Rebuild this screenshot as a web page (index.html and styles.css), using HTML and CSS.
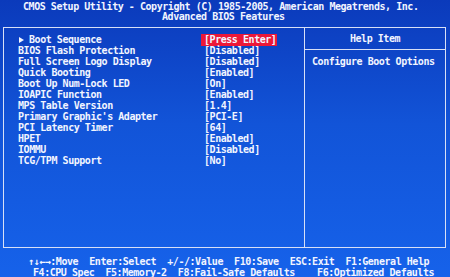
FILE: index.html
```html
<!DOCTYPE html>
<html lang="en">
<head>
    <meta charset="UTF-8">
    <title>Advanced BIOS Features</title>
    <link rel="stylesheet" href="styles.css">
</head>
<body>
    <header class="title">
        <div class="title-line">CMOS Setup Utility - Copyright (C) 1985-2005, American Megatrends, Inc.</div>
        <div class="subtitle-line">Advanced BIOS Features</div>
    </header>

    <main class="setup-box">
        <section class="items">
            <div class="row"><span class="label"><svg class="arrow" width="11" height="8" viewBox="0 0 11 8"><polygon points="1,1 6,4 1,7" fill="#f4f6ff"/></svg>Boot Sequence</span><span class="value selected">[Press Enter]</span></div>
            <div class="row"><span class="label">BIOS Flash Protection</span><span class="value">[Disabled]</span></div>
            <div class="row"><span class="label">Full Screen Logo Display</span><span class="value">[Disabled]</span></div>
            <div class="row"><span class="label">Quick Booting</span><span class="value">[Enabled]</span></div>
            <div class="row"><span class="label">Boot Up Num-Lock LED</span><span class="value">[On]</span></div>
            <div class="row"><span class="label">IOAPIC Function</span><span class="value">[Enabled]</span></div>
            <div class="row"><span class="label">MPS Table Version</span><span class="value">[1.4]</span></div>
            <div class="row"><span class="label">Primary Graphic's Adapter</span><span class="value">[PCI-E]</span></div>
            <div class="row"><span class="label">PCI Latency Timer</span><span class="value">[64]</span></div>
            <div class="row"><span class="label">HPET</span><span class="value">[Enabled]</span></div>
            <div class="row"><span class="label">IOMMU</span><span class="value">[Disabled]</span></div>
            <div class="row"><span class="label">TCG/TPM Support</span><span class="value">[No]</span></div>
        </section>
        <aside class="help">
            <div class="help-title">Help Item</div>
            <div class="help-text">Configure Boot Options</div>
        </aside>
    </main>

    <footer class="keys">
        <div class="keys-line first">↑↓←→:Move  Enter:Select  +/-/:Value  F10:Save  ESC:Exit  F1:General Help</div>
        <div class="keys-line second">F4:CPU Spec  F5:Memory-2  F8:Fail-Safe Defaults    F6:Optimized Defaults</div>
    </footer>
</body>
</html>
```

FILE: styles.css
```css
body {
    margin: 0;
    width: 450px;
    height: 277px;
    overflow: hidden;
    background: linear-gradient(#0b3abb, #1254d8 45%, #1662ea);
    color: #f2f5ff;
    font-family: 'DejaVu Sans Mono', 'Liberation Mono', monospace;
    font-weight: bold;
    font-size: 10px;
    letter-spacing: -0.45px;
    line-height: 10px;
}

.title {
    padding-top: 2px;
    height: 25px;
}

.title-line,
.subtitle-line,
.keys-line,
.label,
.value {
    white-space: pre;
}

.title-line {
    padding-left: 23px;
}

.subtitle-line {
    padding-left: 162px;
}

.setup-box {
    display: grid;
    grid-template-columns: 301px 1fr;
    margin-left: 3px;
    width: 441px;
    height: 219px;
    border: 1px solid #d8e0f6;
}

.items {
    padding: 6px 0 0 14px;
    border-right: 1px solid #d8e0f6;
}

.row {
    display: flex;
    height: 11px;
    line-height: 11px;
}

.label {
    width: 186px;
}

.arrow {
    vertical-align: -1px;
}

.value.selected {
    background: #ec1838;
    margin-left: -3px;
    padding: 0 1px 0 3px;
    height: 12px;
    line-height: 12px;
}

.help-title {
    height: 21px;
    line-height: 21px;
    text-align: center;
    border-bottom: 1px solid #d8e0f6;
}

.help-text {
    padding: 6px 0 0 7px;
    line-height: 11px;
}

.keys {
    padding-top: 8px;
}

.keys-line {
    height: 11px;
    line-height: 11px;
}

.keys-line.first {
    padding-left: 28px;
}

.keys-line.second {
    padding-left: 33px;
}
```
